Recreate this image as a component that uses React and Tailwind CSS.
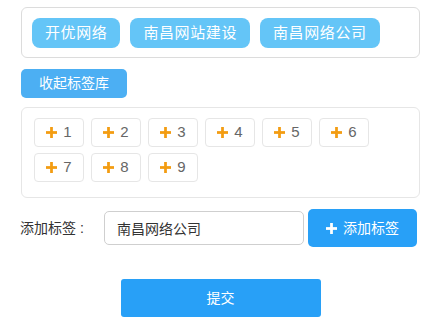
import React, { useState } from 'react';

const font = { fontFamily: '"Liberation Sans", "Noto Sans CJK SC", sans-serif' };

const Plus = ({ className, size = 11 }) => (
    <svg width={size} height={size} viewBox="0 0 12 12" className={className}>
        <rect x="4.5" y="0" width="3" height="12" fill="currentColor" />
        <rect x="0" y="4.5" width="12" height="3" fill="currentColor" />
    </svg>
);

const App = () => {
    const [tags] = useState(['开优网络', '南昌网站建设', '南昌网络公司']);
    const [value, setValue] = useState('南昌网络公司');
    const library = [1, 2, 3, 4, 5, 6, 7, 8, 9];

    return (
        <div className="bg-white min-h-screen pl-[21px] pt-[7px]" style={font}>
            <div className="w-[399px]">

                {/* 已选标签 */}
                <div className="h-[51px] border border-[#dcdcdc] rounded-[6px] flex items-center gap-[10px] pl-[10px]">
                    {tags.map((t) => (
                        <span key={t} className="h-[30px] leading-[30px] px-[13px] text-[15px] tracking-[0.6px] text-white bg-[#64c5f7] rounded-[8px]">
                            {t}
                        </span>
                    ))}
                </div>

                {/* 收起按钮 */}
                <button className="mt-[11px] h-[29px] w-[106px] text-[14px] text-white bg-[#4caff3] rounded-[5px]">
                    收起标签库
                </button>

                {/* 标签库 */}
                <div className="mt-[9px] border border-[#e6e6e6] rounded-[6px] pl-[12px] pr-[12px] pt-[10px] pb-[15px] flex flex-wrap gap-x-[7px] gap-y-[6px]">
                    {library.map((n) => (
                        <div key={n} className="w-[50px] h-[29px] border border-[#e6e6e6] rounded-[4px] flex items-center justify-center gap-[6px] text-[15px] text-[#666]">
                            <Plus className="text-[#f39c12]" size={11} />
                            <span>{n}</span>
                        </div>
                    ))}
                </div>

                {/* 添加标签 */}
                <div className="mt-[11px] -ml-[1px] flex items-center h-[38px]">
                    <span className="w-[84px] text-[14px] text-[#333]">添加标签 :</span>
                    <input
                        value={value}
                        onChange={(e) => setValue(e.target.value)}
                        className="w-[200px] h-[34px] border border-[#cfcfcf] rounded-[5px] px-[12px] text-[14px] text-[#333] outline-none"
                        style={font}
                    />
                    <button className="ml-[4px] w-[109px] h-[38px] rounded-[5px] bg-[#28a0f7] text-white text-[14px] flex items-center justify-center gap-[6px]">
                        <Plus className="text-white" size={11} />
                        添加标签
                    </button>
                </div>

                {/* 提交 */}
                <div className="mt-[32px] flex justify-center">
                    <button className="w-[200px] h-[38px] rounded-[3px] bg-[#28a0f7] text-white text-[14px]">
                        提交
                    </button>
                </div>

            </div>
        </div>
    );
};

export default App;
